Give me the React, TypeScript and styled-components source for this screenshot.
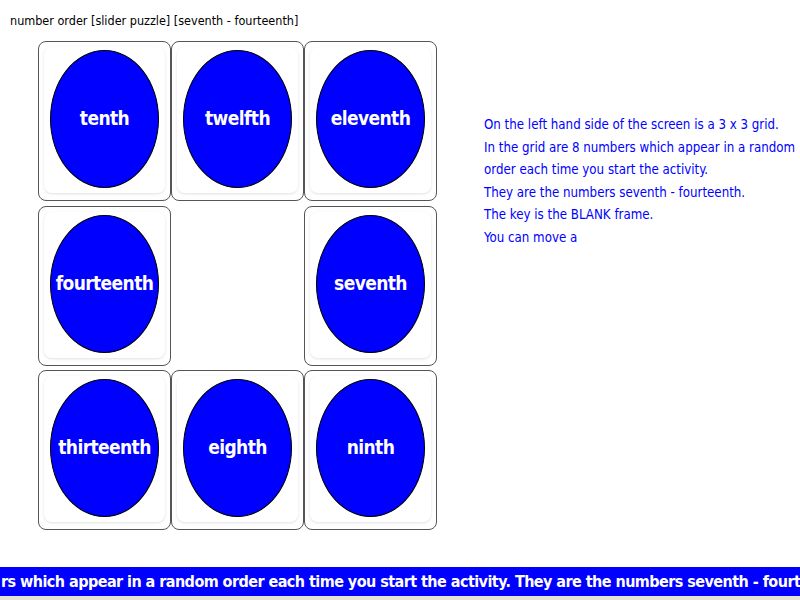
import React from "react";
import styled, { createGlobalStyle } from "styled-components";

const Global = createGlobalStyle`
  html, body { margin: 0; padding: 0; background: #fff; }
  body { font-family: "DejaVu Sans Condensed", sans-serif; }
`;

const Page = styled.div`
  width: 800px;
  height: 600px;
  display: flex;
  flex-direction: column;
  overflow: hidden;
`;

const Header = styled.div`
  padding: 13px 0 0 10px;
  height: 41px;
  box-sizing: border-box;
  font-size: 12.5px;
  color: #000;
  white-space: nowrap;
`;

const Main = styled.div`
  display: flex;
  align-items: flex-start;
`;

const Grid = styled.div`
  margin-left: 38px;
  display: grid;
  grid-template-columns: repeat(3, 133px);
  grid-auto-rows: 160px;
  column-gap: 0;
  row-gap: 4.5px;
`;

const Tile = styled.div<{ $blank?: boolean }>`
  box-sizing: border-box;
  border: ${(p) => (p.$blank ? "none" : "1px solid #555")};
  border-radius: 8px;
  background: #fff;
  padding: 5px 5px 7px 5px;
  display: flex;
`;

const Inner = styled.div`
  flex: 1;
  border-radius: 8px;
  background: #fff;
  box-shadow: 0 1px 3px rgba(0, 0, 0, 0.12);
  display: flex;
  align-items: flex-start;
  justify-content: center;
  padding-top: 3px;
`;

const Oval = styled.div`
  width: 109px;
  height: 138px;
  box-sizing: border-box;
  border-radius: 50%;
  background: #0000ff;
  border: 1.5px solid #000;
  display: flex;
  align-items: center;
  justify-content: center;
  color: #fff;
  font-weight: bold;
  font-size: 19px;
  letter-spacing: -0.6px;
  padding-bottom: 2px;
`;

const Info = styled.div`
  margin: 73px 0 0 47px;
  color: #0000ff;
  font-size: 13.2px;
  line-height: 22.5px;
  white-space: nowrap;
`;

const Ticker = styled.div`
  margin-top: auto;
  height: 29px;
  background: #0000ff;
  color: #fff;
  font-size: 16px;
  font-weight: bold;
  letter-spacing: -0.55px;
  line-height: 29px;
  white-space: nowrap;
  overflow: hidden;
  padding-left: 1px;
`;

const Strip = styled.div`
  height: 4px;
  background: #e6e2d6;
`;

const tiles: (string | null)[] = [
  "tenth", "twelfth", "eleventh",
  "fourteenth", null, "seventh",
  "thirteenth", "eighth", "ninth",
];

export default function App() {
  return (
    <Page>
      <Global />
      <Header>number order [slider puzzle] [seventh - fourteenth]</Header>
      <Main>
        <Grid>
          {tiles.map((t, i) =>
            t ? (
              <Tile key={i}>
                <Inner>
                  <Oval>{t}</Oval>
                </Inner>
              </Tile>
            ) : (
              <Tile key={i} $blank />
            )
          )}
        </Grid>
        <Info>
          On the left hand side of the screen is a 3 x 3 grid.<br />
          In the grid are 8 numbers which appear in a random<br />
          order each time you start the activity.<br />
          They are the numbers seventh - fourteenth.<br />
          The key is the BLANK frame.<br />
          You can move a
        </Info>
      </Main>
      <Ticker>
        rs which appear in a random order each time you start the activity. They are the numbers seventh - fourteenth.
      </Ticker>
      <Strip />
    </Page>
  );
}
